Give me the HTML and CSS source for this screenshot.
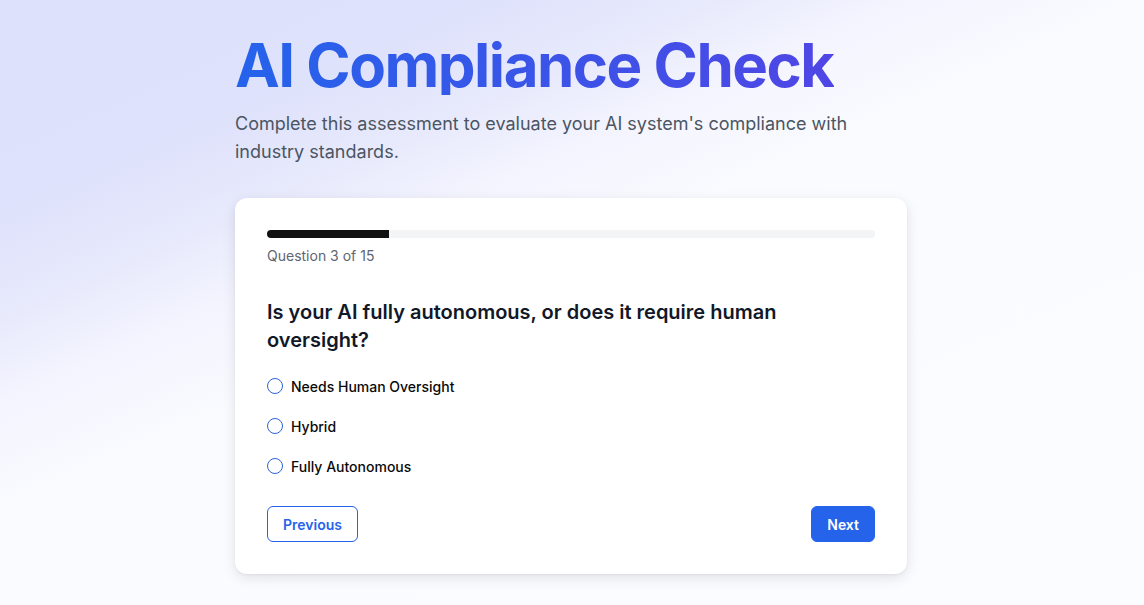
FILE: index.html
```html
<!DOCTYPE html>
<html lang="en">
  <head>
    <meta charset="UTF-8" />
    <title>AI Compliance Check</title>
    <link rel="stylesheet" href="styles.css">
  </head>
  <body>
    <div class="page">
      <h1 class="title">AI Compliance Check</h1>
      <p class="subtitle">
        Complete this assessment to evaluate your AI system's compliance with
        industry standards.
      </p>

      <div class="card">
        <div class="progress">
          <div class="progress-fill" style="width: 20%"></div>
        </div>
        <p class="progress-label">Question 3 of 15</p>

        <h2 class="question">
          Is your AI fully autonomous, or does it require human oversight?
        </h2>

        <div class="options">
          <label class="option">
            <input type="radio" name="autonomy" value="oversight" />
            <span>Needs Human Oversight</span>
          </label>
          <label class="option">
            <input type="radio" name="autonomy" value="hybrid" />
            <span>Hybrid</span>
          </label>
          <label class="option">
            <input type="radio" name="autonomy" value="autonomous" />
            <span>Fully Autonomous</span>
          </label>
        </div>

        <div class="actions">
          <button type="button" class="btn btn-outline">Previous</button>
          <button type="button" class="btn btn-primary">Next</button>
        </div>
      </div>
    </div>
  </body>
</html>
```

FILE: styles.css
```css
html,
body {
  height: 100%;
}

body {
  margin: 0;
  font-family: Inter, "Liberation Sans", Arial, sans-serif;
  background-color: #fbfcff;
  background-image: linear-gradient(
    156deg,
    #dde1fb 0%,
    #dfe2fb 20%,
    #e7e9fc 28%,
    #f3f4fe 36%,
    #fafbff 46%,
    #fbfcff 100%
  );
  background-repeat: no-repeat;
}

.page {
  width: 672px;
  margin: 0 auto;
  padding: 35px 2px 0 0;
}

.title {
  margin: 0 0 15px;
  font-size: 60px;
  line-height: 60px;
  font-weight: 700;
  letter-spacing: -1.5px;
  background: linear-gradient(90deg, #2563eb, #4f46e5);
  -webkit-background-clip: text;
  background-clip: text;
  color: transparent;
  display: inline-block;
}

.subtitle {
  margin: 0 0 32px;
  font-size: 18px;
  line-height: 28px;
  color: #4b5563;
}

.card {
  background-color: #ffffff;
  border-radius: 12px;
  box-shadow: 0 4px 14px rgba(0, 0, 0, 0.1), 0 1px 3px rgba(0, 0, 0, 0.05);
  padding: 32px;
}

.progress {
  height: 8px;
  background-color: #f3f4f6;
  border-radius: 4px;
  overflow: hidden;
}

.progress-fill {
  height: 100%;
  background-color: #111111;
}

.progress-label {
  margin: 8px 0 0;
  font-size: 14px;
  line-height: 20px;
  color: #5f6570;
}

.question {
  margin: 32px 0 0;
  font-size: 20px;
  line-height: 28px;
  font-weight: 600;
  color: #111827;
  padding-right: 80px;
}

.options {
  margin-top: 16px;
  display: flex;
  flex-direction: column;
  gap: 8px;
}

.option {
  display: flex;
  align-items: center;
  gap: 8px;
  height: 32px;
  font-size: 14px;
  font-weight: 500;
  color: #0a0a0a;
  cursor: pointer;
}

.option input {
  appearance: none;
  -webkit-appearance: none;
  margin: 0;
  width: 16px;
  height: 16px;
  border: 1px solid #2f62d6;
  border-radius: 50%;
  background: #fff;
}

.option input:checked {
  border: 5px solid #2563eb;
}

.actions {
  margin-top: 24px;
  display: flex;
  justify-content: space-between;
}

.btn {
  height: 36px;
  padding: 0 15px;
  border-radius: 6px;
  font-family: inherit;
  font-size: 14px;
  font-weight: 600;
  cursor: pointer;
}

.btn-outline {
  background-color: #ffffff;
  border: 1px solid #2563eb;
  color: #2563eb;
}

.btn-primary {
  background-color: #2563eb;
  border: 1px solid #2563eb;
  color: #ffffff;
}

.btn-primary:hover {
  background-color: #1d4ed8;
}
```
